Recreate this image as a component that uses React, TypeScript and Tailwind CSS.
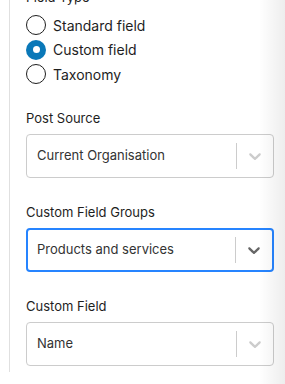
import { useState } from "react";

const Chevron = ({ dark }: { dark?: boolean }) => (
  <svg
    viewBox="0 0 20 20"
    className={`h-5 w-5 ${dark ? "fill-[#666666]" : "fill-[#cccccc]"}`}
  >
    <path d="M4.516 7.548c0.436-0.446 1.043-0.481 1.576 0l3.908 3.747 3.908-3.747c0.533-0.481 1.141-0.446 1.574 0 0.436 0.445 0.408 1.197 0 1.615-0.406 0.418-4.695 4.502-4.695 4.502-0.217 0.223-0.502 0.335-0.787 0.335s-0.57-0.112-0.789-0.335c0 0-4.287-4.084-4.695-4.502s-0.436-1.17 0-1.615z" />
  </svg>
);

function SelectField({ label, value, focused }: { label: string; value: string; focused?: boolean }) {
  return (
    <div className="flex flex-col gap-[7px]">
      <div className="text-[13px] leading-[18px] text-[#1e1e1e]">{label}</div>
      <div
        className={`flex h-[44px] items-center rounded-[4px] bg-white ${
          focused ? "border-2 border-[#2684ff]" : "border border-[#cccccc]"
        }`}
      >
        <div className={`flex-1 text-[13px] text-[#333333] ${focused ? "pl-[9px]" : "pl-[10px]"}`}>{value}</div>
        <span className="h-[26px] w-px bg-[#cccccc]" />
        <div className="flex w-[36px] items-center justify-center">
          <Chevron dark={focused} />
        </div>
      </div>
    </div>
  );
}

export default function App() {
  const [fieldType, setFieldType] = useState("custom");

  const options = [
    { id: "standard", label: "Standard field" },
    { id: "custom", label: "Custom field" },
    { id: "taxonomy", label: "Taxonomy" },
  ];

  return (
    <div className="relative h-[384px] w-[285px] overflow-hidden bg-white font-['Inter',sans-serif]">
      <div className="ml-[9px] h-full border-l border-[#e0e0e0] pl-[16px] pr-[11px]">
        <div className="-mt-[12px] flex flex-col">
          {/* Field type */}
          <div className="text-[13px] leading-[18px] text-[#1e1e1e]">Field Type</div>
          <div className="mt-[9px] flex flex-col gap-[4.5px]">
            {options.map((o) => (
              <label key={o.id} className="flex h-[20px] items-center gap-[7px] text-[14px] text-[#1e1e1e]">
                <span
                  onClick={() => setFieldType(o.id)}
                  className={`flex h-[20px] w-[20px] items-center justify-center rounded-full ${
                    fieldType === o.id ? "bg-[#0a78b8]" : "border-[1.5px] border-[#1e1e1e] bg-white"
                  }`}
                >
                  {fieldType === o.id && <span className="h-[7px] w-[7px] rounded-full bg-white" />}
                </span>
                {o.label}
              </label>
            ))}
          </div>

          {/* Selects */}
          <div className="mt-[25px] flex flex-col gap-[25px]">
            <SelectField label="Post Source" value="Current Organisation" />
            <SelectField label="Custom Field Groups" value="Products and services" focused />
            <SelectField label="Custom Field" value="Name" />
          </div>
        </div>
      </div>

      {/* scroll shadow */}
      <div className="pointer-events-none absolute right-0 top-0 h-full w-[26px] bg-gradient-to-r from-white/0 to-black/[0.07]" />
    </div>
  );
}
